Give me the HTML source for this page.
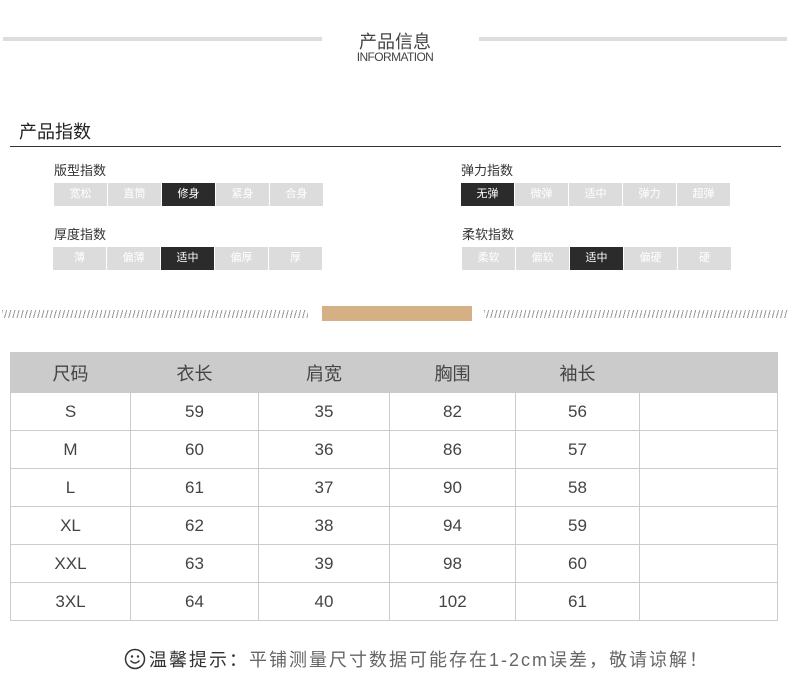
<!DOCTYPE html>
<html><head><meta charset="utf-8"><style>
body{margin:0;width:790px;height:693px;background:#fff;position:relative;font-family:"Liberation Sans","Noto Sans CJK SC",sans-serif;color:#333;overflow:hidden}
.a{position:absolute}
.btns{position:absolute;display:flex;gap:1px}
.btns div{width:53px;height:23px;background:#dcdcdc;color:#fff;font-size:11px;line-height:23px;text-align:center}
.btns div.on{background:#2b2b2b;color:#fff}
.lbl{position:absolute;font-size:13px;color:#333}
table{position:absolute;left:10px;top:352px;border-collapse:collapse;width:768px}
td{border:1px solid #ccc;height:37px;text-align:center;font-size:17px;color:#444;padding:0}
tr.h td{background:#cbcbcb;height:39px;border-color:#cbcbcb;font-size:18px;color:#444}
.hatch{position:absolute;height:8px;top:310px;background:repeating-linear-gradient(105deg,#999 0 1px,transparent 1px 4px)}
</style></head><body>
<div class="a" style="left:3px;top:37px;width:319px;height:4px;background:#ddd"></div>
<div class="a" style="left:479px;top:37px;width:308px;height:4px;background:#ddd"></div>
<div class="a" style="left:322px;top:28px;width:146px;text-align:center;font-size:18px;color:#444">产品信息</div>
<div class="a" style="left:322px;top:50px;width:146px;text-align:center;font-size:12px;color:#444;letter-spacing:-0.6px">INFORMATION</div>
<div class="a" style="left:19px;top:118px;font-size:18px;color:#222">产品指数</div>
<div class="a" style="left:10px;top:146px;width:771px;height:1px;background:#333"></div>
<div class="lbl" style="left:54px;top:160px">版型指数</div>
<div class="btns" style="left:54px;top:183px"><div>宽松</div><div>直筒</div><div class="on">修身</div><div>紧身</div><div>合身</div></div>
<div class="lbl" style="left:461px;top:160px">弹力指数</div>
<div class="btns" style="left:461px;top:183px"><div class="on">无弹</div><div>微弹</div><div>适中</div><div>弹力</div><div>超弹</div></div>
<div class="lbl" style="left:54px;top:224px">厚度指数</div>
<div class="btns" style="left:53px;top:247px"><div>薄</div><div>偏薄</div><div class="on">适中</div><div>偏厚</div><div>厚</div></div>
<div class="lbl" style="left:462px;top:224px">柔软指数</div>
<div class="btns" style="left:462px;top:247px"><div>柔软</div><div>偏软</div><div class="on">适中</div><div>偏硬</div><div>硬</div></div>
<div class="hatch" style="left:2px;width:306px"></div>
<div class="a" style="left:322px;top:306px;width:150px;height:15px;background:#d5b085"></div>
<div class="hatch" style="left:484px;width:304px"></div>
<table>
<colgroup><col style="width:120px"><col style="width:128px"><col style="width:131px"><col style="width:126px"><col style="width:124px"><col></colgroup>
<tr class="h"><td>尺码</td><td>衣长</td><td>肩宽</td><td>胸围</td><td>袖长</td><td></td></tr>
<tr><td>S</td><td>59</td><td>35</td><td>82</td><td>56</td><td></td></tr>
<tr><td>M</td><td>60</td><td>36</td><td>86</td><td>57</td><td></td></tr>
<tr><td>L</td><td>61</td><td>37</td><td>90</td><td>58</td><td></td></tr>
<tr><td>XL</td><td>62</td><td>38</td><td>94</td><td>59</td><td></td></tr>
<tr><td>XXL</td><td>63</td><td>39</td><td>98</td><td>60</td><td></td></tr>
<tr><td>3XL</td><td>64</td><td>40</td><td>102</td><td>61</td><td></td></tr>
</table>
<svg class="a" style="left:124px;top:648px" width="22" height="22" viewBox="0 0 22 22"><circle cx="11" cy="11" r="9.5" fill="none" stroke="#333" stroke-width="1.5"/><circle cx="8" cy="8.5" r="1.2" fill="#333"/><circle cx="14" cy="8.5" r="1.2" fill="#333"/><path d="M6.5 12.5 Q11 17.5 15.5 12.5" fill="none" stroke="#333" stroke-width="1.4"/></svg>
<div class="a" style="left:149px;top:646px;font-size:18px;color:#666;white-space:nowrap;letter-spacing:2px"><span style="color:#333">温馨提示：</span>平铺测量尺寸数据可能存在1-2cm误差，敬请谅解！</div>
</body></html>
